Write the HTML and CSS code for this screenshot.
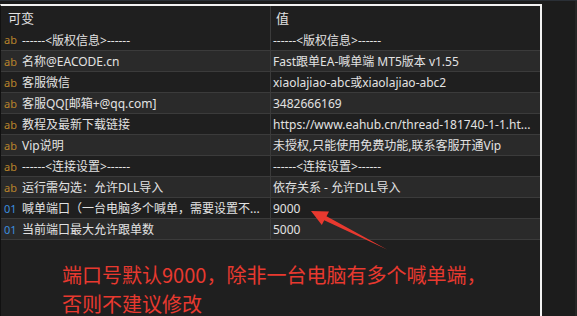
FILE: index.html
```html
<!DOCTYPE html>
<html lang="zh-CN">
<head>
    <meta charset="UTF-8">
    <title>输入参数</title>
    <link rel="stylesheet" href="styles.css">
</head>
<body>
    <div class="screen">
        <div class="panel">
            <div class="grid">
                <div class="row head">
                    <div class="cell name">可变</div>
                    <div class="cell value">值</div>
                </div>
                <div class="row first">
                    <div class="cell name"><span class="tag ab">ab</span>------&lt;版权信息&gt;------</div>
                    <div class="cell value">------&lt;版权信息&gt;------</div>
                </div>
                <div class="row alt">
                    <div class="cell name"><span class="tag ab">ab</span>名称@EACODE.cn</div>
                    <div class="cell value">Fast跟单EA-喊单端 MT5版本 v1.55</div>
                </div>
                <div class="row">
                    <div class="cell name"><span class="tag ab">ab</span>客服微信</div>
                    <div class="cell value">xiaolajiao-abc或xiaolajiao-abc2</div>
                </div>
                <div class="row alt">
                    <div class="cell name"><span class="tag ab">ab</span>客服QQ[邮箱+@qq.com]</div>
                    <div class="cell value">3482666169</div>
                </div>
                <div class="row">
                    <div class="cell name"><span class="tag ab">ab</span>教程及最新下载链接</div>
                    <div class="cell value">https://www.eahub.cn/thread-181740-1-1.ht...</div>
                </div>
                <div class="row alt">
                    <div class="cell name"><span class="tag ab">ab</span>Vip说明</div>
                    <div class="cell value">未授权,只能使用免费功能,联系客服开通Vip</div>
                </div>
                <div class="row">
                    <div class="cell name"><span class="tag ab">ab</span>------&lt;连接设置&gt;------</div>
                    <div class="cell value">------&lt;连接设置&gt;------</div>
                </div>
                <div class="row alt">
                    <div class="cell name"><span class="tag ab">ab</span>运行需勾选：允许DLL导入</div>
                    <div class="cell value">依存关系 - 允许DLL导入</div>
                </div>
                <div class="row">
                    <div class="cell name"><span class="tag num">01</span>喊单端口（一台电脑多个喊单，需要设置不...</div>
                    <div class="cell value">9000</div>
                </div>
                <div class="row alt last">
                    <div class="cell name"><span class="tag num">01</span>当前端口最大允许跟单数</div>
                    <div class="cell value">5000</div>
                </div>
            </div>
            <div class="note">
                <div>端口号默认9000，除非一台电脑有多个喊单端，</div>
                <div>否则不建议修改</div>
            </div>
        </div>
        <div class="side"></div>
        <svg class="arrow" width="577" height="316" viewBox="0 0 577 316">
            <polygon points="311,210 329,210.5 326.5,215.2 387,248.5 324.2,219.2 321.8,224" fill="#e8392f"/>
        </svg>
    </div>
</body>
</html>
```

FILE: styles.css
```css
* {
    margin: 0;
    padding: 0;
    box-sizing: border-box;
}
html, body {
    width: 577px;
    height: 316px;
    background: #1b1b1b;
    overflow: hidden;
}
body {
    font-family: "Noto Sans", "Noto Sans CJK SC", sans-serif;
    font-size: 12px;
    color: #e2e2e2;
}
.screen {
    position: relative;
    display: flex;
    height: 316px;
    padding-top: 3px;
    border-top: 1px solid #2a2f36;
}
.panel {
    width: 542px;
    height: 100%;
    overflow: hidden;
    background: #1f1f1f;
    border-top: 2px solid #f2f2f2;
    border-right: 2px solid #f2f2f2;
    border-left: 1px solid #111111;
}
.side {
    flex: 1;
    background: #1c1c1c;
    border-right: 2px solid #262626;
    margin-top: -3px;
}
.row {
    display: grid;
    grid-template-columns: 269px 1fr;
    height: 21px;
    border-top: 1px solid #3b3b3b;
    background: #1f1f1f;
}
.row.head {
    height: 23px;
    border-top: none;
}
.row.first {
    border-top: none;
}
.row.alt {
    background: #2a2a2a;
}
.row.last {
    height: 22px;
    border-bottom: 1px solid #3b3b3b;
}
.cell {
    display: flex;
    align-items: center;
    white-space: nowrap;
    overflow: hidden;
}
.name {
    padding-left: 3px;
}
.value {
    border-left: 1px solid #3b3b3b;
    padding-left: 2px;
}
.head .name {
    padding-left: 7px;
    font-size: 13px;
}
.head .value {
    padding-left: 5px;
    font-size: 13px;
}
.tag {
    flex: none;
    width: 18px;
    font-size: 11px;
}
.ab {
    color: #b8832c;
}
.num {
    color: #3d8ede;
}
.note {
    display: flex;
    flex-direction: column;
    gap: 9px;
    padding: 25px 0 0 61px;
    font-family: "Noto Sans CJK SC", sans-serif;
    font-size: 20px;
    line-height: 20px;
    color: #e8392f;
}
.arrow {
    position: absolute;
    left: 0;
    top: 0;
}
```
